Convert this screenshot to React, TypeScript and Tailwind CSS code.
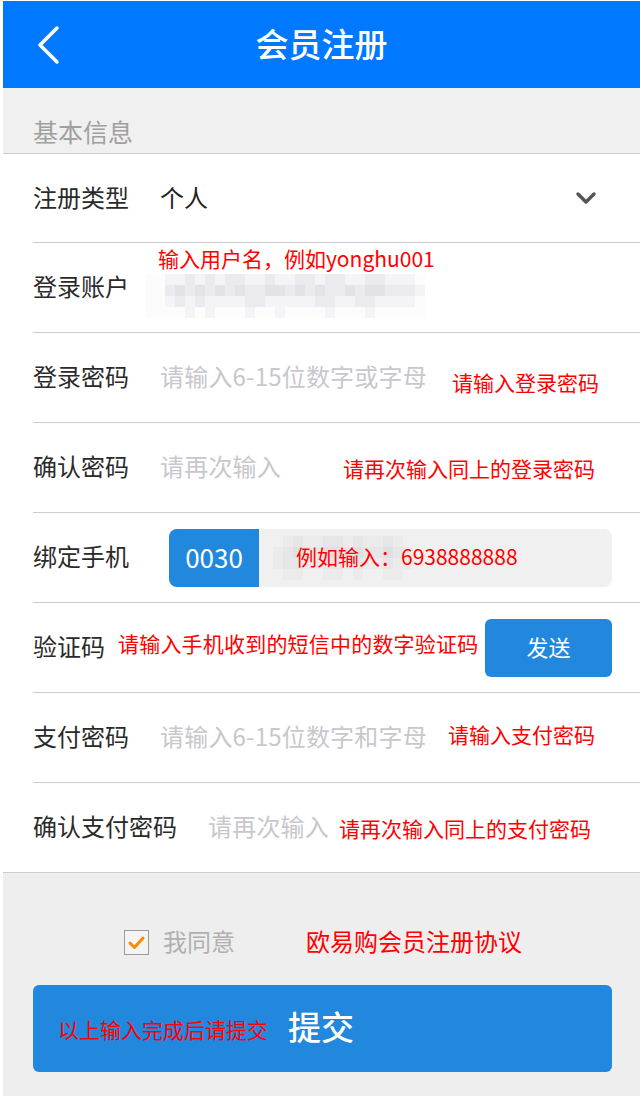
const shades = ["bg-[#fcfcfd]", "bg-[#f4f4f6]", "bg-[#ebebef]", "bg-[#e2e2e7]"];
const boxShades = ["bg-[#f0f0f0]", "bg-[#ebebec]", "bg-[#e6e6e8]", "bg-[#e0e0e3]"];

// blurred input text, pixelated in the screenshot
const accountBlur = [
  "0011212122112112212211221110",
  "0023232323223323232232332221",
  "0012121111221111122112211110",
  "0000101000100100001000100000",
];

const phoneBlur = [
  "01211221211210000",
  "12322332322321000",
  "12211221211211000",
  "01100110100110000",
];

function Mosaic({ rows, palette }: { rows: string[]; palette: string[] }) {
  return (
    <div className="flex flex-col">
      {rows.map((row, r) => (
        <div key={r} className="flex">
          {row.split("").map((c, i) => (
            <div key={i} className={`h-[11px] w-[10px] ${palette[Number(c)]}`} />
          ))}
        </div>
      ))}
    </div>
  );
}

function Label({ children, w }: { children: string; w?: string }) {
  return <div className={`mb-[3px] shrink-0 text-[24px] leading-[30px] text-[#2a2a2a] ${w ?? ""}`}>{children}</div>;
}

function Hint({ children, className }: { children: string; className?: string }) {
  return <div className={`whitespace-nowrap text-[21px] leading-[26px] text-[#ff0000] ${className ?? ""}`}>{children}</div>;
}

function Placeholder({ children }: { children: string }) {
  return <div className="mb-[3px] whitespace-nowrap text-[24px] leading-[30px] tracking-[0.2px] text-[#c7c7cd]">{children}</div>;
}

export default function App() {
  return (
    <div className="flex h-[1096px] w-[640px] flex-col overflow-hidden bg-white pl-[3px] pt-px font-['Noto_Sans_CJK_SC',sans-serif]">
      {/* Header */}
      <header className="grid h-[87px] shrink-0 grid-cols-[1fr_auto_1fr] items-center bg-[#0078ff]">
        <svg width="24" height="40" viewBox="0 0 24 40" className="ml-[33px]">
          <path d="M21 3 L4 20 L21 37" fill="none" stroke="white" strokeWidth="3.5" strokeLinecap="round" strokeLinejoin="round" />
        </svg>
        <h1 className="mb-[4px] text-[33px] font-medium leading-[40px] text-white">会员注册</h1>
        <div />
      </header>

      {/* Section title */}
      <div className="h-[66px] shrink-0 border-b border-[#cccccc] bg-[#f0f0f0] pl-[30px] pt-[28px]">
        <div className="text-[25px] leading-[30px] text-[#a0a0a0]">基本信息</div>
      </div>

      {/* 注册类型 */}
      <div className="ml-[30px] flex h-[89px] shrink-0 items-center border-b border-[#cccccc] pr-[28px]">
        <Label w="w-[127px]">注册类型</Label>
        <div className="mb-[3px] text-[24px] leading-[30px] text-[#222]">个人</div>
        <svg width="22" height="14" viewBox="0 0 22 14" className="ml-auto mr-[15px]">
          <path d="M3 3 L11 11 L19 3" fill="none" stroke="#555" strokeWidth="3.5" strokeLinecap="round" strokeLinejoin="round" />
        </svg>
      </div>

      {/* 登录账户 */}
      <div className="ml-[30px] flex h-[90px] shrink-0 items-center border-b border-[#cccccc]">
        <Label w="w-[112px]">登录账户</Label>
        <div className="flex flex-col self-start pt-[2px]">
          <Hint className="pl-[13px] leading-[24px]">输入用户名，例如yonghu001</Hint>
          <div className="mt-[3px]">
            <Mosaic rows={accountBlur} palette={shades} />
          </div>
        </div>
      </div>

      {/* 登录密码 */}
      <div className="ml-[30px] flex h-[90px] shrink-0 items-center border-b border-[#cccccc]">
        <Label w="w-[127px]">登录密码</Label>
        <Placeholder>请输入6-15位数字或字母</Placeholder>
        <Hint className="ml-[25px] mt-[8px]">请输入登录密码</Hint>
      </div>

      {/* 确认密码 */}
      <div className="ml-[30px] flex h-[90px] shrink-0 items-center border-b border-[#cccccc]">
        <Label w="w-[127px]">确认密码</Label>
        <Placeholder>请再次输入</Placeholder>
        <Hint className="ml-[62px] mt-[1px]">请再次输入同上的登录密码</Hint>
      </div>

      {/* 绑定手机 */}
      <div className="ml-[30px] flex h-[90px] shrink-0 items-center border-b border-[#cccccc] pr-[28px]">
        <Label w="w-[136px]">绑定手机</Label>
        <div className="flex h-[58px] flex-1 overflow-hidden rounded-[8px] bg-[#f0f0f0]">
          <div className="flex w-[90px] items-center justify-center bg-[#2288dd] pb-[2px] text-[26px] text-white">0030</div>
          <div className="relative flex flex-1 items-center">
            <div className="absolute left-[14px] top-[7px]">
              <Mosaic rows={phoneBlur} palette={boxShades} />
            </div>
            <Hint className="relative mb-[4px] ml-[37px]">例如输入：6938888888</Hint>
          </div>
        </div>
      </div>

      {/* 验证码 */}
      <div className="ml-[30px] flex h-[90px] shrink-0 items-center border-b border-[#cccccc] pr-[28px]">
        <Label>验证码</Label>
        <Hint className="mb-[9px] ml-[13px] tracking-[0.2px]">请输入手机收到的短信中的数字验证码</Hint>
        <button className="ml-auto flex h-[58px] w-[127px] items-center justify-center rounded-[6px] bg-[#2288dd] pb-[2px] text-[22px] text-white">
          发送
        </button>
      </div>

      {/* 支付密码 */}
      <div className="ml-[30px] flex h-[90px] shrink-0 items-center border-b border-[#cccccc]">
        <Label w="w-[127px]">支付密码</Label>
        <Placeholder>请输入6-15位数字和字母</Placeholder>
        <Hint className="mb-[8px] ml-[21px]">请输入支付密码</Hint>
      </div>

      {/* 确认支付密码 */}
      <div className="ml-[30px] flex h-[89px] shrink-0 items-center">
        <Label w="w-[175px]">确认支付密码</Label>
        <Placeholder>请再次输入</Placeholder>
        <Hint className="ml-[10px] mt-[0px]">请再次输入同上的支付密码</Hint>
      </div>

      {/* Footer */}
      <div className="flex-1 border-t border-[#cccccc] bg-[#eeeeee] pt-[56px]">
        <div className="flex h-[26px] items-center pl-[121px]">
          <div className="flex h-[25px] w-[25px] items-center justify-center border border-[#9a9a9a] bg-[#f4f4f4]">
            <svg width="21" height="21" viewBox="0 0 21 21">
              <path d="M4 11 L8.5 15.5 L17 6" fill="none" stroke="#ff8800" strokeWidth="3" strokeLinecap="round" strokeLinejoin="round" />
            </svg>
          </div>
          <div className="mb-[2px] ml-[14px] text-[24px] leading-[30px] text-[#b0b0b0]">我同意</div>
          <div className="mb-[2px] ml-[71px] text-[24px] leading-[30px] text-[#ff0000]">欧易购会员注册协议</div>
        </div>
        <button className="ml-[30px] mt-[30px] flex h-[87px] w-[579px] items-center rounded-[6px] bg-[#2288dd] pl-[25px]">
          <span className="mt-[2px] text-[21px] text-[#ff0000]">以上输入完成后请提交</span>
          <span className="mb-[4px] ml-[20px] text-[33px] font-medium text-white">提交</span>
        </button>
      </div>
    </div>
  );
}
